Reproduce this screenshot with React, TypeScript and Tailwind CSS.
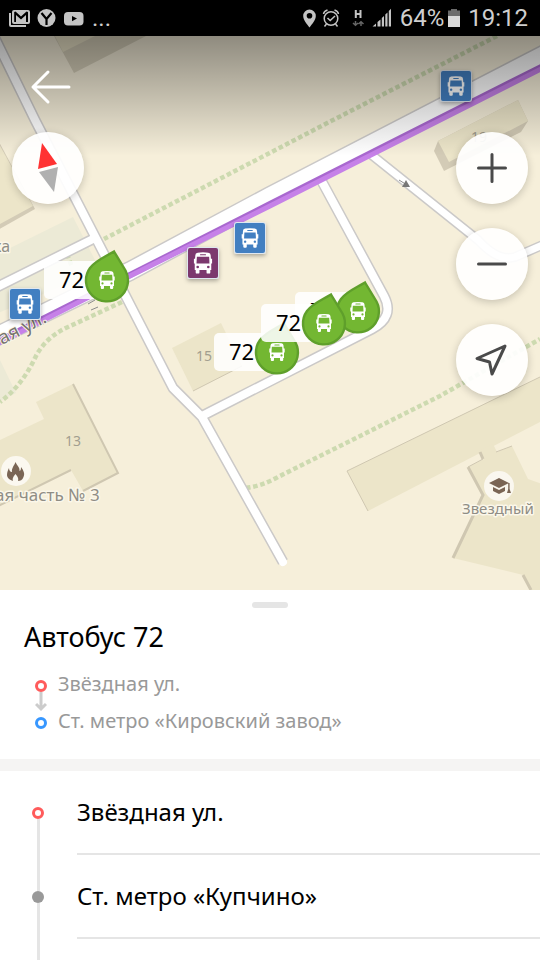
import React from 'react';

// ─── Types ────────────────────────────────────────────────────────────────────
interface Point {
  x: number;
  y: number;
}

interface Stop {
  id: string;
  name: string;
  terminal?: boolean;
}

// ─── Data ─────────────────────────────────────────────────────────────────────
const ROUTE = {
  title: 'Автобус 72',
  from: 'Звёздная ул.',
  to: 'Ст. метро «Кировский завод»',
};

const STOPS: Stop[] = [
  { id: 'zvezdnaya', name: 'Звёздная ул.', terminal: true },
  { id: 'kupchino', name: 'Ст. метро «Купчино»' },
];

const ROADS = [
  { d: 'M-8 32 L35 120 L156 355 L173 388 L202 417 L283 562', width: 8 },
  { d: 'M95 238 L-5 288', width: 8 },
  { d: 'M202 416 L372 329 Q395 317 384 296 L320 178', width: 8 },
  { d: 'M368 152 L478 240 Q498 262 515 257 L545 244', width: 7 },
  { d: 'M-5 337 L130 271 L270 196 L545 54', width: 17 },
];

const PATHS = [
  'M497 36 L337 118 L104 239',
  'M122 302 L68 327 Q46 337 36 356 Q22 386 0 402',
  'M246 488 Q262 486 278 477 L440 396 L540 339',
];

const BUS_STOPS: Point[] = [
  { x: 250, y: 238 },
  { x: 25, y: 304 },
];

const BUSES: Point[] = [
  { x: 107, y: 280 },
  { x: 277, y: 352 },
  { x: 358, y: 311 },
  { x: 324, y: 323 },
];

// ─── Map pieces ───────────────────────────────────────────────────────────────
function BusGlyph({ color, scale = 1 }: { color: string; scale?: number }) {
  return (
    <g transform={`scale(${scale})`}>
      <path
        d="M-6.500 -6.500 Q-6.500 -8.500 -4.500 -8.700 Q0 -9.400 4.500 -8.700 Q6.500 -8.500 6.500 -6.500 L7 0 V6 H-7 V0 Z M-7.700 -3.500 h1.500 v4 h-1.500 Z M6.200 -3.500 h1.500 v4 h-1.500 Z M-6.200 6 h3.200 v2 q0 1 -1 1 h-1.200 q-1 0 -1 -1 Z M3 6 h3.200 v2 q0 1 -1 1 h-1.200 q-1 0 -1 -1 Z"
        fill="#fff"
      />
      <path d="M-5.200 -5.200 H5.200 L5.500 0.500 H-5.500 Z" fill={color} />
      <rect x="-2.600" y="-7.500" width="5.200" height="1" rx="0.500" fill={color} />
      <circle cx="-4.500" cy="3.400" r="1.100" fill={color} />
      <circle cx="4.500" cy="3.400" r="1.100" fill={color} />
    </g>
  );
}

function StopMarker({ x, y, color = '#427fc1', scale = 1.08 }: Point & { color?: string; scale?: number }) {
  return (
    <g transform={`translate(${x} ${y})`} filter="url(#shadow)">
      <rect x="-16" y="-16" width="32" height="32" rx="3" fill="#dfe7f0" />
      <rect x="-15" y="-15" width="30" height="30" rx="2" fill={color} />
      <BusGlyph color={color} scale={scale} />
    </g>
  );
}

function BusMarker({ x, y }: Point) {
  return (
    <g transform={`translate(${x} ${y})`}>
      <rect x="-63" y="-19" width="62" height="38" rx="5" fill="#fff" fillOpacity="0.88" />
      <text x="-48" y="8" fontSize="22" fill="#000">
        72
      </text>
      <path
        d="M7 -28.500 L18.500 -9.500 A21 21 0 1 1 -17 -12 C-12 -19 -4 -22 7 -28.500 Z"
        fill="#73b732"
        stroke="#5f9f2b"
        strokeWidth="2.400"
      />
      <BusGlyph color="#73b732" />
    </g>
  );
}

function MapView() {
  return (
    <svg
      className="absolute inset-0 size-full"
      viewBox="0 36 540 554"
      preserveAspectRatio="xMidYMid slice"
      fontFamily="'Noto Sans', sans-serif"
      aria-label="Карта"
    >
      <defs>
        <linearGradient id="fade" x1="0" y1="0" x2="0" y2="1">
          <stop offset="0" stopColor="#000" stopOpacity="0.42" />
          <stop offset="1" stopColor="#000" stopOpacity="0" />
        </linearGradient>
        <filter id="shadow" x="-30%" y="-30%" width="160%" height="170%">
          <feDropShadow dx="0" dy="2" stdDeviation="2" floodOpacity="0.3" />
        </filter>
      </defs>

      <rect y="36" width="540" height="554" fill="#f6efda" />

      {/* Yards */}
      <path d="M-2 254 L73 217 L96 262 L88 275 L-2 313 Z M-2 356 L16 393 L-2 402 Z" fill="#ecead6" />

      {/* Buildings */}
      <g fill="#ece5c9">
        <path d="M54 36 L74 73 L146 36 Z" fill="#d8d1bb" />
        <path d="M55 36 L63 52 L95 36 Z" />
        <path d="M-2 140 L35 209 L-2 230 Z" fill="#d3cbb6" />
        <path d="M-2 142 L33 206 L-2 225 Z" />
        <path d="M438 141 L434 151 L444 171 L521 132 L528 121 L518 100 Z" fill="#d3cbb6" />
        <path d="M438 141 L518 100 L528 121 L449 162 Z" />
        <path d="M172 348 L221 323 L242 366 L193 391 Z" />
        <path d="M36 402 L73 384 L118 473 L83 491 L71 470 L-2 506 V441 L44 419 Z" />
        <path d="M347 471 L542 376 V421 L368 511 Z" />
        <path d="M468 467 L484 459 L479 451 L493 444 L497 452 L512 446 L528 479 L542 484 V592 H531 L523 575 L453 558 L483 495 Z" />
      </g>
      <g fill="none" stroke="#cfc7b1">
        <path d="M73 384 L118 473 L83 491 M71 470 L-2 506" strokeWidth="2" />
        <path d="M193 391 L242 366" strokeWidth="1" />
        <path d="M368 511 L347 471 L540 377" strokeWidth="1" />
        <path d="M480 452 L483 459 M468 467 L483 495 L453 558 M523 575 L531 590" strokeWidth="3" />
        <path d="M483 459 L468 467 M496 452 L512 446" strokeWidth="1" />
      </g>

      <g fill="none" stroke="#cddab0" strokeWidth="4.500" strokeDasharray="4.600 2.700">
        {PATHS.map((d) => (
          <path key={d} d={d} />
        ))}
        <path d="M67 254 L72 267" />
      </g>

      {/* Roads: casings first, then the surface */}
      <g fill="none" strokeLinejoin="round">
        {ROADS.map((road) => (
          <path key={road.d} d={road.d} stroke="#cbc9c8" strokeWidth={road.width + 3} />
        ))}
        {ROADS.map((road) => (
          <path key={road.d} d={road.d} stroke="#fff" strokeWidth={road.width} strokeLinecap="round" />
        ))}
        <path d="M-5 343 L130 275 L270 204 L545 65" stroke="#a968cf" strokeWidth="6" />
        <path d="M-5 345 L130 276 L270 206 L545 67" stroke="#c681e8" strokeWidth="5" />
      </g>

      <g stroke="#8b8b8b" strokeWidth="1">
        <path d="M399 180 L407 185 M88 304 L95 300 M91 310 L98 307" />
        <path d="M406 180 L410 187 L402 187 Z" fill="#777" stroke="none" />
      </g>

      {/* Captions */}
      <g fill="#8f8d85" stroke="#fbf7ea" strokeWidth="3" strokeLinejoin="round" paintOrder="stroke">
        <text x="-7" y="252" fontSize="16">ка</text>
        <text x="2" y="345" fontSize="19" fill="#77746f" strokeWidth="2" transform="rotate(-27 2 345)">ая ул.</text>
        <text x="-5" y="501" fontSize="17">ая часть № 3</text>
        <text x="462" y="514" fontSize="15">Звездный</text>
      </g>
      <g fill="#a29e8f" fontSize="14">
        <text x="65" y="446">13</text>
        <text x="196" y="361">15</text>
        <text x="471" y="142">19</text>
      </g>

      {/* Places */}
      <circle cx="16" cy="471" r="15" fill="#fbf8f0" />
      <path
        d="M15.500 462 C17 466 20 467 19.500 471 C21 471 21 468 21 467 C24 471 25 474 23.500 477 C22.500 480 20 481 18 481 C19 478 17 476 15.500 474 C14 476 12 478 13 481 C10 480 7 478 7 475 C7 472 8 470 9 468 C9 470 10 472 12 472 C11.500 468 14 466 15.500 462 Z"
        fill="#7a6555"
      />
      <circle cx="499" cy="486" r="15" fill="#faf7ef" />
      <path
        d="M489 483 L499 478 L509 483 L499 488 Z M493 487 L499 490 L505 487 V491 L499 494 L493 491 Z M508.200 483 H509.600 V489 L511 493 H507 L508.200 489 Z"
        fill="#7a6555"
      />

      {BUS_STOPS.map((p) => (
        <StopMarker key={`${p.x}-${p.y}`} {...p} />
      ))}
      <StopMarker x={203} y={263} color="#7b386e" scale={1.18} />
      <StopMarker x={456} y={86} />

      {BUSES.map((p) => (
        <BusMarker key={`${p.x}-${p.y}`} {...p} />
      ))}

      <rect y="36" width="540" height="120" fill="url(#fade)" />
    </svg>
  );
}

function RoundButton({ label, children }: { label: string; children: React.ReactNode }) {
  return (
    <button
      type="button"
      aria-label={label}
      className="flex size-18 items-center justify-center rounded-full bg-white/92 shadow-[0_2px_8px_rgba(0,0,0,0.2)]"
    >
      {children}
    </button>
  );
}

// ─── Status bar ───────────────────────────────────────────────────────────────
function StatusBar() {
  return (
    <header className="flex h-9 shrink-0 items-center justify-between bg-black pr-3 pl-2 font-[Roboto,sans-serif] text-[24px] leading-none text-[#cfcfcf]">
      <div className="flex items-center">
        <svg width="80" height="20" viewBox="8 8 80 20" fill="#c4c4c4">
          <path d="M9 13 H11 V25 H26 V27 H11 Q9 27 9 25 Z" />
          <path
            fillRule="evenodd"
            d="M14 10 H28 Q30 10 30 12 V22 Q30 24 28 24 H14 Q12 24 12 22 V12 Q12 10 14 10 Z M14.200 12 V22 H16 V15 L21 19.500 L26 15 V22 H28 V12 L26.500 11.500 L21 16.500 L15.500 11.500 Z"
          />
          <circle cx="46.500" cy="18" r="9" />
          <path d="M41.500 13 L46.500 19 L51.500 13 M46.500 18 V25" fill="none" stroke="#000" strokeWidth="2.200" />
          <rect x="64" y="12" width="19.500" height="13.500" rx="4" />
          <path d="M72 16 L77 18.600 L72 21.300 Z" fill="#000" />
        </svg>
        <span className="pl-1 leading-5">...</span>
      </div>

      <div className="flex items-center">
        <svg width="98" height="22" viewBox="304 7 98 22" fill="#c4c4c4">
          <path
            fillRule="evenodd"
            d="M312.500 9.500 A6.300 6.300 0 0 1 318.800 16 C318.800 20 315 24 312.500 27.500 C310 24 306.200 20 306.200 16 A6.300 6.300 0 0 1 312.500 9.500 Z M312.500 13 A2.800 2.800 0 1 0 312.500 18.600 A2.800 2.800 0 1 0 312.500 13 Z"
          />
          <g fill="none" stroke="#c4c4c4" strokeWidth="1.500">
            <circle cx="334" cy="18.500" r="6.800" />
            <path d="M330.500 18 L333.200 20.500 L338 16 M326.500 14 Q327 11 330.500 10 M341.500 14 Q341 11 337.500 10 M329.500 24 L327.500 26.500 M338.500 24 L340.500 26.500" />
            <path d="M358.800 10 V18 M363.500 10 V18 M358.800 14 H363.500" strokeWidth="2" />
            <path d="M358.500 21 V25 M356 23 L358.500 25.300 L361 23 M364 26 V22 M361.500 24 L364 21.700 L366.500 24" stroke="#666" />
          </g>
          <path d="M375.500 26.500 L379 23.500 V26.500 Z M380.500 22 L383.500 19.500 V26.500 H380.500 Z M384.800 18 L387 16 V26.500 H384.800 Z M388.300 14.500 L390.500 12.500 V26.500 H388.300 Z M391.800 11 L394 8.800 V26.500 H391.800 Z" />
        </svg>
        <span className="pl-px">64%</span>
        <svg className="mr-2 ml-1" width="12" height="19" viewBox="0 0 12 19">
          <path d="M3 0 H9 V1.500 H12 V7 H0 V1.500 H3 Z" fill="#6b6b6b" />
          <rect y="7" width="12" height="11" fill="#d8d8d8" />
        </svg>
        <span>19:12</span>
      </div>
    </header>
  );
}

// ─── Route sheet ──────────────────────────────────────────────────────────────
function Ring({ className }: { className: string }) {
  return <span className={`size-3 shrink-0 rounded-full border-[3px] bg-white ${className}`} />;
}

function RouteSummary() {
  return (
    <section className="border-b-12 border-[#f5f4f3] px-6 pt-3 pb-5">
      <div className="mx-auto h-1.5 w-9 rounded-full bg-[#e5e5e5]" />
      <h1 className="mt-[13px] text-[27px] leading-8 text-black">{ROUTE.title}</h1>
      <div className="mt-3 flex gap-[11px] pl-[11px]">
        <div className="flex flex-col items-center pt-[15px]">
          <Ring className="border-[#ff5b5b]" />
          <svg width="12" height="25" viewBox="0 0 12 25" fill="none" stroke="#ccc" strokeWidth="3">
            <path d="M6 0 V16 M1 12 L6 17 L11 12" />
          </svg>
          <Ring className="border-[#3797ff]" />
        </div>
        <div className="text-[20px] leading-[37px] text-[#999]">
          <p>{ROUTE.from}</p>
          <p>{ROUTE.to}</p>
        </div>
      </div>
    </section>
  );
}

function StopRow({ stop }: { stop: Stop }) {
  return (
    <li className="flex h-21">
      <div className="flex w-[77px] shrink-0 flex-col items-center pr-px">
        <span className={`w-[3px] flex-1 ${stop.terminal ? '' : 'bg-[#e5e5e5]'}`} />
        {stop.terminal ? (
          <Ring className="border-[#ff5b5b]" />
        ) : (
          <span className="size-3 rounded-full bg-[#999]" />
        )}
        <span className="w-[3px] flex-1 bg-[#e5e5e5]" />
      </div>
      <div className="flex flex-1 items-center border-b-2 border-[#e5e5e5] text-[24px] leading-8 text-black">
        {stop.name}
      </div>
    </li>
  );
}

// ─── Screen ───────────────────────────────────────────────────────────────────
export default function App() {
  return (
    <div className="flex h-screen flex-col overflow-hidden bg-white font-['Noto_Sans',sans-serif]">
      <StatusBar />

      <div className="relative h-[554px] shrink-0 overflow-hidden">
        <MapView />
        <div className="relative flex justify-between px-3 pt-8">
          <div className="flex flex-col gap-6">
            <button type="button" aria-label="Назад" className="ml-4 h-10 w-12 self-start">
              <svg
                width="48"
                height="40"
                viewBox="0 0 48 40"
                fill="none"
                stroke="#fff"
                strokeWidth="3"
                strokeLinecap="round"
                strokeLinejoin="round"
              >
                <path d="M41 19 H5 M20 4 L5 19 L20 34" />
              </svg>
            </button>
            <RoundButton label="Компас">
              <svg width="48" height="56" viewBox="0 0 48 56">
                <path d="M18 3 L33 24 L14 29 Z" fill="#f33" />
                <path d="M15 32 L34 27 L30 52 Z" fill="#b0b0b0" />
              </svg>
            </RoundButton>
          </div>
          <div className="flex flex-col gap-6 pt-16">
            <RoundButton label="Приблизить">
              <svg width="32" height="32" viewBox="0 0 32 32" stroke="#4a4a4a" strokeWidth="3" strokeLinecap="round">
                <path d="M16 2.500 V29.500 M2.500 16 H29.500" />
              </svg>
            </RoundButton>
            <RoundButton label="Отдалить">
              <svg width="32" height="32" viewBox="0 0 32 32" stroke="#4a4a4a" strokeWidth="3" strokeLinecap="round">
                <path d="M2.500 16 H29.500" />
              </svg>
            </RoundButton>
            <RoundButton label="Моё местоположение">
              <svg width="36" height="36" viewBox="0 0 36 36" fill="none" stroke="#4a4a4a" strokeWidth="3" strokeLinejoin="round">
                <path d="M31 4 L3 16.500 L15.500 20 L18 32 Z" />
              </svg>
            </RoundButton>
          </div>
        </div>
      </div>

      <main className="flex flex-1 flex-col">
        <RouteSummary />
        <ul>
          {STOPS.map((stop) => (
            <StopRow key={stop.id} stop={stop} />
          ))}
        </ul>
        <div className="flex w-[77px] flex-1 justify-center pr-px">
          <span className="w-[3px] bg-[#e5e5e5]" />
        </div>
      </main>
    </div>
  );
}
